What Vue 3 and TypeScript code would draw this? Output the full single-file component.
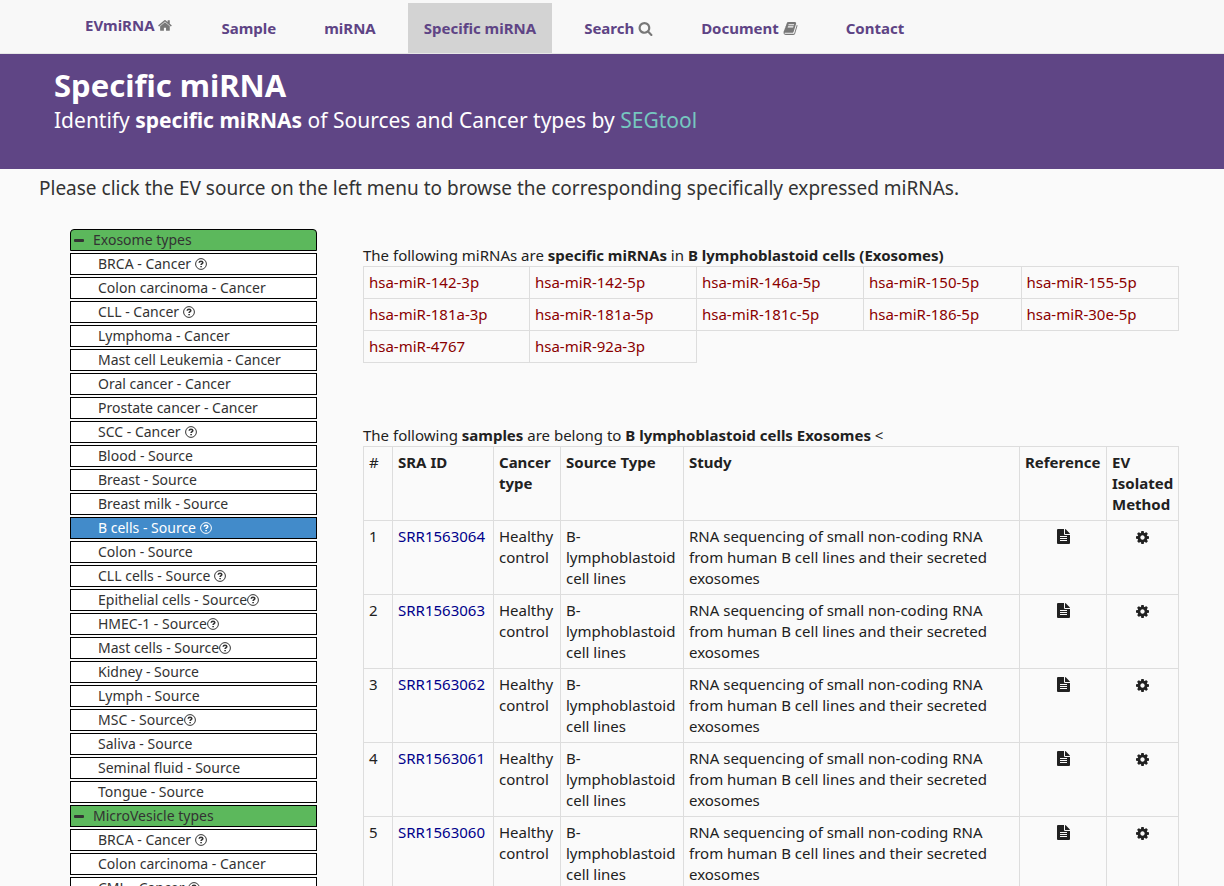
<script setup lang="ts">
interface NavItem {
  label: string
  icon?: 'home' | 'search' | 'book'
  active?: boolean
  brand?: boolean
}

interface SourceItem {
  label: string
  help?: 'spaced' | 'tight'
  active?: boolean
}

interface SourceGroup {
  title: string
  items: SourceItem[]
}

const navItems: NavItem[] = [
  { label: 'EVmiRNA', icon: 'home', brand: true },
  { label: 'Sample' },
  { label: 'miRNA' },
  { label: 'Specific miRNA', active: true },
  { label: 'Search', icon: 'search' },
  { label: 'Document', icon: 'book' },
  { label: 'Contact' },
]

const iconPaths: Record<'home' | 'search' | 'book', string> = {
  home: 'M1408 992v480q0 26-19 45t-45 19h-384v-384h-256v384h-384q-26 0-45-19t-19-45v-480q0-1 .5-3t.5-3l575-474 575 474q1 2 1 6zm223-69l-62 74q-8 9-21 11h-3q-13 0-21-7l-692-577-692 577q-12 8-24 7-13-2-21-11l-62-74q-8-10-7-23.5t11-21.5l719-599q32-26 76-26t76 26l244 204v-195q0-14 9-23t23-9h192q14 0 23 9t9 23v408l219 182q10 8 11 21.5t-7 23.5z',
  search: 'M1216 832q0-185-131.5-316.5t-316.5-131.5-316.5 131.5-131.5 316.5 131.5 316.5 316.5 131.5 316.5-131.5 131.5-316.5zm512 832q0 52-38 90t-90 38q-54 0-90-38l-343-342q-179 124-399 124-143 0-273.5-55.5t-225-150-150-225-55.5-273.5 55.5-273.5 150-225 225-150 273.5-55.5 273.5 55.5 225 150 150 225 55.5 273.5q0 220-124 399l343 343q37 37 37 90z',
  book: 'M1703 478q40 57 18 129l-275 906q-19 64-76.5 107.5t-122.5 43.5h-923q-77 0-148.5-53.5t-99.5-131.5q-24-67-2-127 0-4 3-27t4-37q1-8-3-21.5t-3-19.5q2-11 8-21t16.5-23.5 16.5-23.5q23-38 45-91.5t30-91.5q3-10 .5-30t-.5-28q3-11 17-28t17-23q21-36 42-92t25-90q1-9-2.5-32t.5-28q4-13 22-30.5t22-22.5q19-26 42.5-84.5t27.5-96.5q1-8-3-25.5t-2-26.5q2-8 9-18t18-23 17-21q8-12 16.5-30.5t15-35 16-36 19.5-32 26.5-23.5 36-11.5 47.5 5.5l-1 3q38-9 51-9h761q74 0 114 56t18 130l-274 906q-36 119-71.5 153.5t-128.5 34.5h-869q-27 0-38 15-11 16-1 43 24 70 144 70h923q29 0 56-15.5t35-41.5l300-987q7-22 5-57 38 15 59 43zm-1064 2q-4 13 2 22.5t20 9.5h608q13 0 25.5-9.5t16.5-22.5l21-64q4-13-2-22.5t-20-9.5h-608q-13 0-25.5 9.5t-16.5 22.5zm-83 256q-4 13 2 22.5t20 9.5h608q13 0 25.5-9.5t16.5-22.5l21-64q4-13-2-22.5t-20-9.5h-608q-13 0-25.5 9.5t-16.5 22.5z',
}

const gearPath =
  'M1152 896q0-106-75-181t-181-75-181 75-75 181 75 181 181 75 181-75 75-181zm512-109v222q0 12-8 23t-20 13l-185 28q-19 54-39 91 35 50 107 138 10 12 10 25t-9 23q-27 37-99 108t-94 71q-12 0-26-9l-138-108q-44 23-91 38-16 136-29 186-7 28-36 28h-222q-14 0-24.5-8.5t-11.5-21.5l-28-184q-49-16-90-37l-141 107q-10 9-25 9-14 0-25-11-126-114-165-168-7-10-7-23 0-12 8-23 15-21 51-66.5t54-70.5q-27-50-41-99l-183-27q-13-2-21-12.5t-8-23.5v-222q0-12 8-23t19-13l186-28q14-46 39-92-40-57-107-138-10-12-10-24 0-10 9-23 26-36 98.5-107.5t94.5-71.5q13 0 26 10l138 107q44-23 91-38 16-136 29-186 7-28 36-28h222q14 0 24.5 8.5t11.5 21.5l28 184q49 16 90 37l142-107q9-9 24-9 13 0 25 10 129 119 165 170 7 8 7 22 0 12-8 23-15 21-51 66.5t-54 70.5q26 50 41 98l183 28q13 2 21 12.5t8 23.5z'

const groups: SourceGroup[] = [
  {
    title: 'Exosome types',
    items: [
      { label: 'BRCA - Cancer', help: 'spaced' },
      { label: 'Colon carcinoma - Cancer' },
      { label: 'CLL - Cancer', help: 'spaced' },
      { label: 'Lymphoma - Cancer' },
      { label: 'Mast cell Leukemia - Cancer' },
      { label: 'Oral cancer - Cancer' },
      { label: 'Prostate cancer - Cancer' },
      { label: 'SCC - Cancer', help: 'spaced' },
      { label: 'Blood - Source' },
      { label: 'Breast - Source' },
      { label: 'Breast milk - Source' },
      { label: 'B cells - Source', help: 'spaced', active: true },
      { label: 'Colon - Source' },
      { label: 'CLL cells - Source', help: 'spaced' },
      { label: 'Epithelial cells - Source', help: 'tight' },
      { label: 'HMEC-1 - Source', help: 'tight' },
      { label: 'Mast cells - Source', help: 'tight' },
      { label: 'Kidney - Source' },
      { label: 'Lymph - Source' },
      { label: 'MSC - Source', help: 'tight' },
      { label: 'Saliva - Source' },
      { label: 'Seminal fluid - Source' },
      { label: 'Tongue - Source' },
    ],
  },
  {
    title: 'MicroVesicle types',
    items: [
      { label: 'BRCA - Cancer', help: 'spaced' },
      { label: 'Colon carcinoma - Cancer' },
      { label: 'CML - Cancer', help: 'spaced' },
    ],
  },
]

const mirnaRows: string[][] = [
  ['hsa-miR-142-3p', 'hsa-miR-142-5p', 'hsa-miR-146a-5p', 'hsa-miR-150-5p', 'hsa-miR-155-5p'],
  ['hsa-miR-181a-3p', 'hsa-miR-181a-5p', 'hsa-miR-181c-5p', 'hsa-miR-186-5p', 'hsa-miR-30e-5p'],
  ['hsa-miR-4767', 'hsa-miR-92a-3p'],
]

const sampleIds: string[] = ['SRR1563064', 'SRR1563063', 'SRR1563062', 'SRR1563061', 'SRR1563060']
</script>

<template>
  <div class="page">
    <nav class="navbar" aria-label="Main">
      <a
        v-for="item in navItems"
        :key="item.label"
        href="#"
        class="nav-link"
        :class="{ active: item.active, brand: item.brand }"
      >
        {{ item.label }}
        <svg v-if="item.icon" class="nav-icon" viewBox="0 0 1792 1792" aria-hidden="true">
          <path :d="iconPaths[item.icon]" />
        </svg>
      </a>
    </nav>

    <header class="hero">
      <h1>Specific miRNA</h1>
      <p>
        Identify <strong>specific miRNAs</strong> of Sources and Cancer types by
        <a href="#">SEGtool</a>
      </p>
    </header>

    <p class="intro">
      Please click the EV source on the left menu to browse the corresponding specifically expressed miRNAs.
    </p>

    <div class="layout">
      <aside class="sources">
        <template v-for="group in groups" :key="group.title">
          <button type="button" class="source group">
            <span class="minus"></span>{{ group.title }}
          </button>
          <a
            v-for="item in group.items"
            :key="item.label"
            href="#"
            class="source"
            :class="{ active: item.active }"
          >
            <span>{{ item.label }}</span>
            <svg
              v-if="item.help"
              class="help"
              :class="item.help"
              viewBox="0 0 12 12"
              aria-hidden="true"
            >
              <circle cx="6" cy="6" r="5.4" />
              <path class="hook" d="M4.2 4.7C4.3 3.6 5 3.2 6 3.2c1 0 1.8.5 1.8 1.4C7.8 5.7 6.1 5.6 6.1 7.1" />
              <path class="hook" d="M6.1 8v1.3" />
            </svg>
          </a>
        </template>
      </aside>

      <main class="content">
        <p>
          The following miRNAs are <strong>specific miRNAs</strong> in
          <strong>B lymphoblastoid cells (Exosomes)</strong>
        </p>
        <table class="mirnas">
          <colgroup>
            <col class="wide" />
            <col class="wide" />
            <col class="wide" />
            <col />
            <col />
          </colgroup>
          <tbody>
            <tr v-for="(row, index) in mirnaRows" :key="index">
              <td v-for="name in row" :key="name">
                <a href="#">{{ name }}</a>
              </td>
            </tr>
          </tbody>
        </table>

        <p>
          The following <strong>samples</strong> are belong to
          <strong>B lymphoblastoid cells Exosomes</strong> &lt;
        </p>
        <table class="samples">
          <colgroup>
            <col class="c-num" />
            <col class="c-sra" />
            <col class="c-cancer" />
            <col class="c-source" />
            <col />
            <col class="c-ref" />
            <col class="c-method" />
          </colgroup>
          <thead>
            <tr>
              <th class="plain">#</th>
              <th>SRA ID</th>
              <th>Cancer type</th>
              <th>Source Type</th>
              <th>Study</th>
              <th>Reference</th>
              <th>EV Isolated Method</th>
            </tr>
          </thead>
          <tbody>
            <tr v-for="(id, index) in sampleIds" :key="id">
              <td>{{ index + 1 }}</td>
              <td><a href="#">{{ id }}</a></td>
              <td>Healthy control</td>
              <td>B-lymphoblastoid cell lines</td>
              <td class="study">RNA sequencing of small non-coding RNA from human B cell lines and their secreted exosomes</td>
              <td class="center">
                <button type="button" class="icon-button" aria-label="Reference">
                  <svg class="file" viewBox="0 0 13 15" aria-hidden="true">
                    <path
                      fill-rule="evenodd"
                      d="M0 1Q0 0 1 0H7V5Q7 6 8 6H13V14Q13 15 12 15H1Q0 15 0 14ZM3 7V8H10V7ZM3 9V10H10V9ZM3 11V12H10V11Z"
                    />
                    <path d="M8 0Q8.600 .2 9 .6L12.400 4Q12.800 4.400 13 5H8Z" />
                  </svg>
                </button>
              </td>
              <td class="center">
                <button type="button" class="icon-button" aria-label="EV isolated method">
                  <svg class="gear" viewBox="128 128 1536 1536" aria-hidden="true">
                    <path :d="gearPath" />
                  </svg>
                </button>
              </td>
            </tr>
          </tbody>
        </table>
      </main>
    </div>
  </div>
</template>

<style>
body {
  margin: 0;
  background: #fafafa;
}
</style>

<style scoped>
.page {
  height: 100vh;
  overflow-y: auto;
  scrollbar-width: none;
  background: #fafafa;
  color: #212121;
  font: 15px/21px "Noto Sans", "Open Sans", sans-serif;
}

p,
h1 {
  margin: 0;
}

a {
  text-decoration: none;
}

.navbar {
  display: flex;
  align-items: flex-start;
  gap: 16px;
  height: 53px;
  padding-left: 69px;
  background: #f8f8f8;
  border-bottom: 1px solid #e7e7e7;
}

.nav-link {
  box-sizing: border-box;
  height: 50px;
  margin-top: 3px;
  padding: 0 16px;
  color: #5e4485;
  font-size: 15px;
  font-weight: 700;
  line-height: 50px;
  white-space: nowrap;
}

.nav-link.brand {
  margin-top: 0;
}

.nav-link.active {
  background: #d3d3d3;
}

.nav-icon {
  width: 15px;
  height: 15px;
  fill: #777;
  vertical-align: -2px;
}

.hero {
  box-sizing: border-box;
  min-height: 115px;
  padding: 10px 54px 0;
  background: #5f4585;
  color: #fff;
}

.hero h1 {
  font-size: 31px;
  font-weight: 700;
  line-height: 42px;
}

.hero p {
  font-size: 21px;
  line-height: 28px;
}

.hero a {
  color: #76c7c0;
}

.intro {
  padding: 5px 39px 0;
  font-size: 19px;
  line-height: 28px;
  color: #333;
}

.layout {
  display: grid;
  grid-template-columns: 247px minmax(0, 1fr);
  align-items: start;
  gap: 46px;
  padding: 27px 45px 0 70px;
}

.sources {
  display: flex;
  flex-direction: column;
  gap: 2px;
  font-size: 14px;
  line-height: 20px;
}

.source {
  display: flex;
  align-items: center;
  box-sizing: border-box;
  height: 22px;
  padding: 0 0 0 27px;
  border: 1px solid #000;
  background: #fff;
  color: #333;
  font: inherit;
  text-align: left;
  white-space: nowrap;
}

.source.group {
  padding-left: 3px;
  background: #5cb85c;
}

.source:first-child {
  border-radius: 4px 4px 0 0;
}

.source.active {
  background: #428bca;
  color: #fff;
}

.minus {
  width: 10px;
  height: 3px;
  margin-right: 9px;
  border-radius: 1px;
  background: #333;
}

.help {
  width: 12px;
  height: 12px;
  fill: none;
  stroke: currentColor;
  stroke-width: 1;
}

.help .hook {
  stroke-width: 1.6;
}

.help.spaced {
  margin-left: 4px;
}

.content {
  padding-top: 16px;
}

table {
  width: 100%;
  border-collapse: collapse;
  table-layout: fixed;
}

td,
th {
  padding: 5px;
  border: 1px solid #ddd;
  text-align: left;
  vertical-align: top;
}

th {
  font-weight: 700;
}

th.plain {
  font-weight: 400;
}

.mirnas {
  margin-bottom: 62px;
}

.mirnas a {
  color: #8b0000;
}

.wide {
  width: 167px;
}

.wide:first-child {
  width: 166px;
}

.samples a {
  color: #00008b;
}

.c-num {
  width: 29px;
}

.c-sra {
  width: 101px;
}

.c-cancer {
  width: 67px;
}

.c-source {
  width: 123px;
}

.c-ref {
  width: 87px;
}

.c-method {
  width: 72px;
}

td.center {
  text-align: center;
}

td.study {
  padding-right: 20px;
}

.icon-button {
  padding: 0;
  border: 0;
  background: none;
  color: #212121;
  line-height: 15px;
  vertical-align: -2px;
}

.icon-button svg {
  display: block;
  fill: currentColor;
}

.file {
  width: 13px;
  height: 15px;
}

.gear {
  width: 13px;
  height: 13px;
}
</style>
